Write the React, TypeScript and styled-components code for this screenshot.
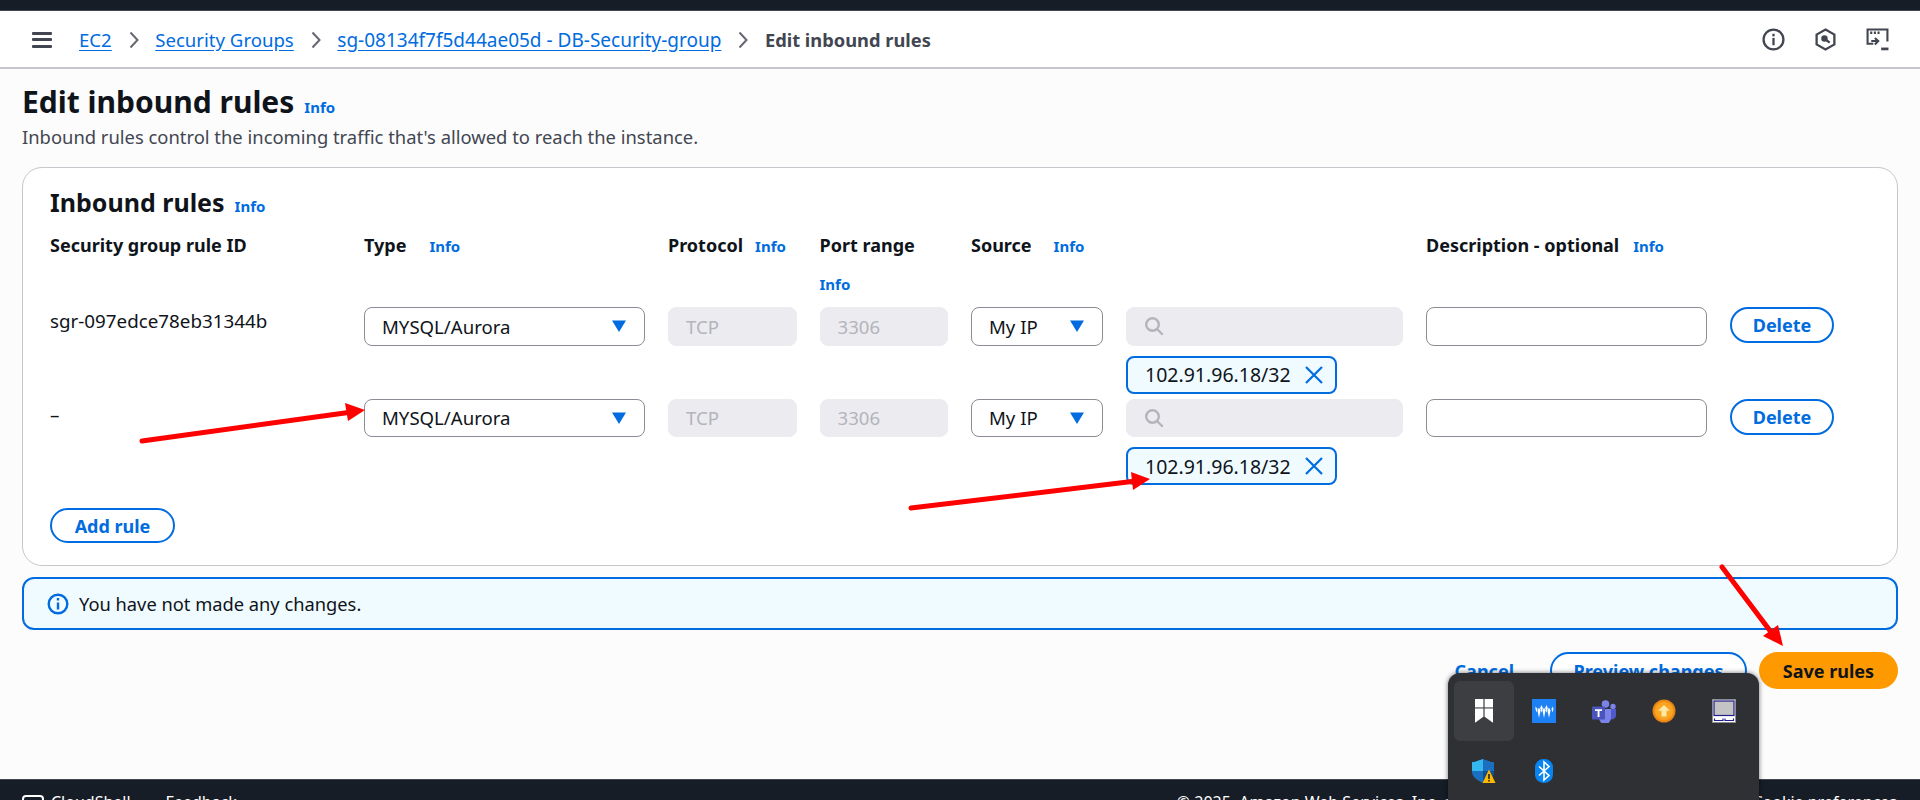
import styled, { createGlobalStyle } from 'styled-components';

const GlobalStyle = createGlobalStyle`
  html, body {
    margin: 0;
    padding: 0;
    height: 800px;
    overflow: hidden;
    background: #fcfcfd;
    color: #0f141a;
    font-family: "Noto Sans", "Open Sans", sans-serif;
    font-size: 16px;
  }
  * { box-sizing: border-box; }
`;

const Page = styled.div`
  position: relative;
  width: 1920px;
  height: 800px;
  overflow: hidden;
  display: flex;
  flex-direction: column;
`;

const TopBar = styled.div`
  height: 11px;
  flex: none;
  background: #161d26;
  border-bottom: 1px solid #424650;
`;

const Nav = styled.nav`
  height: 58px;
  flex: none;
  background: #fff;
  border-bottom: 2px solid #c6c6cd;
  display: flex;
  align-items: center;
  padding: 1px 31px 0 32px;
`;

const Burger = styled.div`
  width: 20px;
  height: 16px;
  margin-right: 27px;
  display: flex;
  flex-direction: column;
  justify-content: space-between;
  & > span {
    display: block;
    height: 3px;
    background: #424650;
    border-radius: 1px;
  }
`;

const Crumb = styled.a<{ $size?: number }>`
  color: #006ce0;
  font-size: ${(p) => p.$size ?? 18.6}px;
  line-height: 24px;
  text-decoration: underline;
  text-underline-offset: 3px;
  white-space: nowrap;
`;

const CrumbCurrent = styled.span`
  color: #424650;
  font-size: 18.3px;
  font-weight: 700;
  line-height: 24px;
  white-space: nowrap;
`;

const Sep = styled.svg`
  width: 10px;
  height: 18px;
  margin: 0 16.5px 0 17px;
  flex: none;
`;

const NavIcons = styled.div`
  margin-left: auto;
  display: flex;
  gap: 29px;
  align-items: center;
`;

const NavIcon = styled.svg`
  width: 23px;
  height: 23px;
  display: block;
`;

const Main = styled.main`
  flex: 1;
  padding: 13px 22px 0;
  display: flex;
  flex-direction: column;
`;

const TitleRow = styled.div`
  display: flex;
  align-items: baseline;
  gap: 10px;
  height: 40px;
`;

const Title = styled.h1`
  margin: 0;
  font-size: 30px;
  line-height: 40px;
  font-weight: 700;
`;

const Info = styled.a`
  color: #006ce0;
  font-size: 15px;
  font-weight: 700;
  line-height: 20px;
`;

const Desc = styled.p`
  margin: 3px 0 0;
  font-size: 18.4px;
  line-height: 24px;
  color: #424650;
  white-space: nowrap;
`;

const Card = styled.section`
  margin-top: 18px;
  height: 399px;
  background: #fff;
  border: 1px solid #c6c6cd;
  border-radius: 20px;
  padding: 16px 0 0 27px;
  display: flex;
  flex-direction: column;
`;

const CardHeading = styled.div`
  display: flex;
  align-items: baseline;
  gap: 10px;
  height: 36px;
`;

const CardTitle = styled.h2`
  margin: 0;
  font-size: 25px;
  line-height: 36px;
  font-weight: 700;
`;

const RuleGrid = styled.div`
  display: grid;
  grid-template-columns: 291px 281px 128.5px 128.5px 132px 277px 281px 104px;
  column-gap: 23px;
  margin-top: 13px;
`;

const HeadCell = styled.div<{ $gap?: number; $wrap?: boolean }>`
  display: flex;
  flex-direction: ${(p) => (p.$wrap ? 'column' : 'row')};
  align-items: ${(p) => (p.$wrap ? 'flex-start' : 'baseline')};
  gap: ${(p) => (p.$wrap ? 19 : (p.$gap ?? 12))}px;
  height: 74px;
  font-size: 18px;
  line-height: 20px;
  font-weight: 700;
  white-space: nowrap;
  padding-top: 2px;
`;

const Plain = styled.div<{ $dash?: boolean }>`
  font-size: 18.8px;
  line-height: 22px;
  padding-top: ${(p) => (p.$dash ? 5 : 3)}px;
`;

const Field = styled.div<{ $disabled?: boolean; $muted?: boolean }>`
  height: 38.5px;
  border-radius: 8px;
  display: flex;
  align-items: center;
  justify-content: space-between;
  padding: 0 17px;
  font-size: 18.6px;
  color: ${(p) => (p.$muted ? '#b4b4bb' : '#0f141a')};
  background: ${(p) => (p.$disabled ? '#ebebf0' : '#fff')};
  border: 1px solid ${(p) => (p.$disabled ? '#ebebf0' : '#8c8c94')};
`;

const Caret = styled.svg`
  width: 16px;
  height: 14px;
  flex: none;
`;

const SourceStack = styled.div`
  display: flex;
  flex-direction: column;
  align-items: flex-start;
  gap: 10px;
  padding-bottom: 5px;
  & > div:first-child { width: 100%; }
`;

const Chip = styled.div`
  height: 38px;
  width: 211px;
  background: #f0fbff;
  border: 2px solid #006ce0;
  border-radius: 8px;
  display: flex;
  align-items: center;
  justify-content: space-between;
  padding: 0 11px 0 17px;
  font-size: 19.5px;
  white-space: nowrap;
`;

const OutlineButton = styled.button<{ $w: number; $h?: number }>`
  width: ${(p) => p.$w}px;
  height: ${(p) => p.$h ?? 36}px;
  background: #fff;
  border: 2px solid #006ce0;
  border-radius: 20px;
  color: #006ce0;
  font: 700 18px/20px "Noto Sans", sans-serif;
  padding: 0;
  white-space: nowrap;
`;

const AddWrap = styled.div`
  margin-top: 18px;
`;

const Alert = styled.div`
  margin-top: 11px;
  height: 53px;
  background: #f0fbff;
  border: 2px solid #006ce0;
  border-radius: 12px;
  display: flex;
  align-items: center;
  gap: 10px;
  padding: 0 0 0 23px;
  font-size: 18.3px;
`;

const Actions = styled.div`
  margin-top: 22px;
  display: flex;
  justify-content: flex-end;
  align-items: center;
`;

const LinkButton = styled.a`
  color: #006ce0;
  font-size: 18px;
  font-weight: 700;
  margin-right: 36px;
`;

const SaveButton = styled.button`
  width: 139px;
  height: 37px;
  margin-left: 12px;
  background: #ff9900;
  border: none;
  border-radius: 20px;
  color: #0f141a;
  font: 700 18px/20px "Noto Sans", sans-serif;
`;

const Footer = styled.footer`
  position: absolute;
  left: 0;
  right: 0;
  top: 779px;
  height: 40px;
  background: #161d26;
  border-top: 1px solid #424650;
  color: #fff;
  font-size: 16px;
  line-height: 20px;
  display: flex;
  align-items: flex-start;
  padding: 12px 23px 0 22px;
`;

const ShellBox = styled.span`
  width: 22px;
  height: 18px;
  border: 2px solid #fff;
  border-radius: 4px;
  margin-top: 3px;
  margin-right: 7px;
`;

const FooterLink = styled.span<{ $ml?: number }>`
  margin-left: ${(p) => p.$ml ?? 0}px;
  white-space: nowrap;
`;

const FooterCookie = styled.span`
  margin-left: auto;
  white-space: nowrap;
`;

const Tray = styled.div`
  position: absolute;
  left: 1448px;
  top: 673px;
  width: 311px;
  height: 140px;
  background: #2f3033;
  border-radius: 12px 12px 0 0;
  box-shadow: 0 0 5px rgba(0, 0, 0, 0.55);
  padding: 8px 6px;
  display: grid;
  grid-template-columns: repeat(5, 60px);
  grid-auto-rows: 60px;
`;

const TrayCell = styled.div<{ $active?: boolean }>`
  display: flex;
  align-items: center;
  justify-content: center;
  border-radius: 6px;
  background: ${(p) => (p.$active ? '#3d3e41' : 'transparent')};
`;

const ArrowLayer = styled.svg`
  position: absolute;
  left: 0;
  top: 0;
  width: 1920px;
  height: 800px;
  pointer-events: none;
`;

const SelectCaret = () => (
  <Caret viewBox="0 0 16 14">
    <path d="M1 1.5h14L8 13z" fill="#006ce0" />
  </Caret>
);

const SearchIcon = () => (
  <svg width="20" height="20" viewBox="0 0 20 20" fill="none" stroke="#b4b4bb" strokeWidth="2.4">
    <circle cx="8.5" cy="8.5" r="6.3" />
    <path d="M13 13l5 5" strokeLinecap="round" />
  </svg>
);

const CloseIcon = () => (
  <svg width="20" height="20" viewBox="0 0 20 20" fill="none" stroke="#006ce0" strokeWidth="2.2">
    <path d="M2 2l16 16M18 2L2 18" />
  </svg>
);

const Chevron = () => (
  <Sep viewBox="0 0 10 18" fill="none" stroke="#656871" strokeWidth="2">
    <path d="M1.5 1.5L8.5 9l-7 7.5" />
  </Sep>
);

type Rule = { id: string; dash?: boolean };
const rules: Rule[] = [{ id: 'sgr-097edce78eb31344b' }, { id: '–', dash: true }];

const BookmarkIcon = () => (
  <svg width="18" height="24" viewBox="0 0 18 24" fill="#fff">
    <rect x="0" y="0" width="8.4" height="8.4" />
    <rect x="9.6" y="0" width="8.4" height="8.4" />
    <path d="M0 9.6h8.4v8.2L0 23.8z" />
    <path d="M9.6 9.6H18v14.2l-8.4-6z" />
  </svg>
);

const WavesIcon = () => (
  <svg width="24" height="24" viewBox="0 0 24 24" fill="#fff">
    <rect width="24" height="24" fill="#1e80f5" />
    <path d="M3.5 7.5l2 2.5-1 3.5-1-3.5z" />
    <path d="M7 8.5l1.5 3L7 19l-1.5-7.5z" />
    <path d="M9.5 6l1.3 3-1.3 5-1.3-5z" />
    <path d="M12 8.5l1.5 3L12 19l-1.5-7.5z" />
    <path d="M14.5 6l1.3 3-1.3 5-1.3-5z" />
    <path d="M17 8.5l1.5 3L17 19l-1.5-7.5z" />
    <path d="M20.5 7.5l-1 2.5 1 3.5 1-3.5z" />
  </svg>
);

const TeamsIcon = () => (
  <svg width="24" height="24" viewBox="0 0 24 24">
    <circle cx="21" cy="7.5" r="2.7" fill="#7b83eb" />
    <circle cx="13.5" cy="5" r="3.8" fill="#7b83eb" />
    <path d="M17 10h7v7a4 4 0 0 1-7 2z" fill="#5059c9" />
    <path d="M7 10h12v9a6 6 0 0 1-12 0z" fill="#7b83eb" />
    <rect x="0" y="7.5" width="13" height="13" rx="1.2" fill="#4b53bc" />
    <path d="M3 10.3h7v1.6H7.5v6H5.6v-6H3z" fill="#fff" />
  </svg>
);

const UpdateIcon = () => (
  <svg width="24" height="24" viewBox="0 0 24 24">
    <defs>
      <radialGradient id="upd" cx="50%" cy="50%" r="50%">
        <stop offset="70%" stopColor="#fba521" />
        <stop offset="100%" stopColor="#e07a10" />
      </radialGradient>
    </defs>
    <circle cx="12" cy="12" r="11.5" fill="url(#upd)" />
    <path d="M12 6l6 5.8h-3.5v5.7h-5v-5.7H6z" fill="#ffe9a8" />
  </svg>
);

const MonitorIcon = () => (
  <svg width="24" height="24" viewBox="0 0 24 24">
    <rect width="24" height="24" fill="#8f8f8f" />
    <rect x="1" y="1" width="22" height="22" fill="#fff" />
    <rect x="2" y="2" width="20" height="14.5" fill="#c4c4c4" stroke="#1f1f8c" strokeWidth="1.2" />
    <path d="M2.5 19.5v2H11v-2M13 19.5v2h8.5v-2" fill="none" stroke="#1f1f8c" strokeWidth="1.2" />
  </svg>
);

const ShieldIcon = () => (
  <svg width="24" height="24" viewBox="0 0 24 24">
    <path d="M0 3.2C3 3 5.5 2 11 0c5.5 2 8 3 11 3.2V13c0 4.5-5 8.5-11 11C5 21.5 0 17.5 0 13z" fill="#1a6fc0" />
    <path d="M11 0C5.5 2 3 3 0 3.2V12h11z" fill="#35b8ee" />
    <path d="M11 12h11v1c0 4.5-5 8.5-11 11z" fill="#10508f" />
    <path d="M10.5 24L17 10.5 23.5 24z" fill="#ffb900" />
    <path d="M16.2 15h1.6v5h-1.6zM16.2 21h1.6v1.6h-1.6z" fill="#222" />
  </svg>
);

const BluetoothIcon = () => (
  <svg width="18" height="24" viewBox="0 0 18 24">
    <rect width="18" height="24" rx="8.5" fill="#0a84f0" />
    <path d="M4 7.5l10 9-5 4.5V3l5 4.5-10 9" fill="none" stroke="#fff" strokeWidth="1.6" />
  </svg>
);

const RuleRow = ({ rule }: { rule: Rule }) => (
  <>
    <Plain $dash={rule.dash}>{rule.id}</Plain>
    <div>
      <Field>
        MYSQL/Aurora
        <SelectCaret />
      </Field>
    </div>
    <div>
      <Field $disabled $muted>
        TCP
      </Field>
    </div>
    <div>
      <Field $disabled $muted>
        3306
      </Field>
    </div>
    <div>
      <Field>
        My IP
        <SelectCaret />
      </Field>
    </div>
    <SourceStack>
      <Field $disabled>
        <SearchIcon />
      </Field>
      <Chip>
        102.91.96.18/32
        <CloseIcon />
      </Chip>
    </SourceStack>
    <div>
      <Field />
    </div>
    <div>
      <OutlineButton $w={104}>Delete</OutlineButton>
    </div>
  </>
);

const App = () => (
  <Page>
    <GlobalStyle />
    <TopBar />
    <Nav>
      <Burger>
        <span />
        <span />
        <span />
      </Burger>
      <Crumb>EC2</Crumb>
      <Chevron />
      <Crumb>Security Groups</Crumb>
      <Chevron />
      <Crumb $size={19}>sg-08134f7f5d44ae05d - DB-Security-group</Crumb>
      <Chevron />
      <CrumbCurrent>Edit inbound rules</CrumbCurrent>
      <NavIcons>
        <NavIcon viewBox="0 0 22 22" fill="none" stroke="#424650" strokeWidth="2.2">
          <circle cx="11" cy="11" r="9.5" />
          <path d="M11 9.5v7" />
          <path d="M11 5.5V8" />
        </NavIcon>
        <NavIcon viewBox="0 0 22 22" fill="none" stroke="#424650" strokeWidth="2.2">
          <path d="M11 1.5l8.5 4.8v9.4L11 20.5l-8.5-4.8V6.3z" />
          <circle cx="10" cy="10" r="2" fill="#424650" />
          <path d="M11 11l4 3" />
        </NavIcon>
        <NavIcon viewBox="0 0 22 22" fill="none" stroke="#424650" strokeWidth="2">
          <path d="M7 15H1.5V1.5h19V13" />
          <path d="M4 4.5h2M7.5 4.5h2M11 4.5h2" strokeWidth="2.4" />
          <path d="M5 12.5h6M8.5 9.5l3.2 3-3.2 3.2" />
          <path d="M14.5 20h7" strokeWidth="2.6" />
        </NavIcon>
      </NavIcons>
    </Nav>
    <Main>
      <TitleRow>
        <Title>Edit inbound rules</Title>
        <Info>Info</Info>
      </TitleRow>
      <Desc>Inbound rules control the incoming traffic that's allowed to reach the instance.</Desc>
      <Card>
        <CardHeading>
          <CardTitle>Inbound rules</CardTitle>
          <Info>Info</Info>
        </CardHeading>
        <RuleGrid>
          <HeadCell>Security group rule ID</HeadCell>
          <HeadCell $gap={23}>
            Type <Info>Info</Info>
          </HeadCell>
          <HeadCell>
            Protocol <Info>Info</Info>
          </HeadCell>
          <HeadCell $wrap>
            Port range <Info>Info</Info>
          </HeadCell>
          <HeadCell $gap={22}>
            Source <Info>Info</Info>
          </HeadCell>
          <HeadCell />
          <HeadCell $gap={14}>
            Description - optional <Info>Info</Info>
          </HeadCell>
          <HeadCell />
          {rules.map((rule) => (
            <RuleRow key={rule.id} rule={rule} />
          ))}
        </RuleGrid>
        <AddWrap>
          <OutlineButton $w={125} $h={35}>
            Add rule
          </OutlineButton>
        </AddWrap>
      </Card>
      <Alert>
        <svg width="22" height="22" viewBox="0 0 22 22" fill="none" stroke="#006ce0" strokeWidth="2.4">
          <circle cx="11" cy="11" r="9.3" />
          <path d="M11 9.5v7M11 5v2.5" />
        </svg>
        You have not made any changes.
      </Alert>
      <Actions>
        <LinkButton>Cancel</LinkButton>
        <OutlineButton $w={197} $h={37}>
          Preview changes
        </OutlineButton>
        <SaveButton>Save rules</SaveButton>
      </Actions>
    </Main>
    <Footer>
      <ShellBox />
      <FooterLink>CloudShell</FooterLink>
      <FooterLink $ml={35}>Feedback</FooterLink>
      <FooterLink $ml={940}>© 2025, Amazon Web Services, Inc. or its affiliates.</FooterLink>
      <FooterCookie>Cookie preferences</FooterCookie>
    </Footer>
    <Tray>
      <TrayCell $active>
        <BookmarkIcon />
      </TrayCell>
      <TrayCell>
        <WavesIcon />
      </TrayCell>
      <TrayCell>
        <TeamsIcon />
      </TrayCell>
      <TrayCell>
        <UpdateIcon />
      </TrayCell>
      <TrayCell>
        <MonitorIcon />
      </TrayCell>
      <TrayCell>
        <ShieldIcon />
      </TrayCell>
      <TrayCell>
        <BluetoothIcon />
      </TrayCell>
    </Tray>
    <ArrowLayer viewBox="0 0 1920 800" fill="none">
      <path d="M142 441L352 412" stroke="#f00" strokeWidth="5" strokeLinecap="round" />
      <path d="M365 410L345 403l3 18z" fill="#f00" />
      <path d="M911 508L1136 481" stroke="#f00" strokeWidth="5" strokeLinecap="round" />
      <path d="M1150 479L1131 472l2 18z" fill="#f00" />
      <path d="M1722 567L1774 636" stroke="#f00" strokeWidth="5" strokeLinecap="round" />
      <path d="M1783 646L1763 636l15-11z" fill="#f00" />
    </ArrowLayer>
  </Page>
);

export default App;
